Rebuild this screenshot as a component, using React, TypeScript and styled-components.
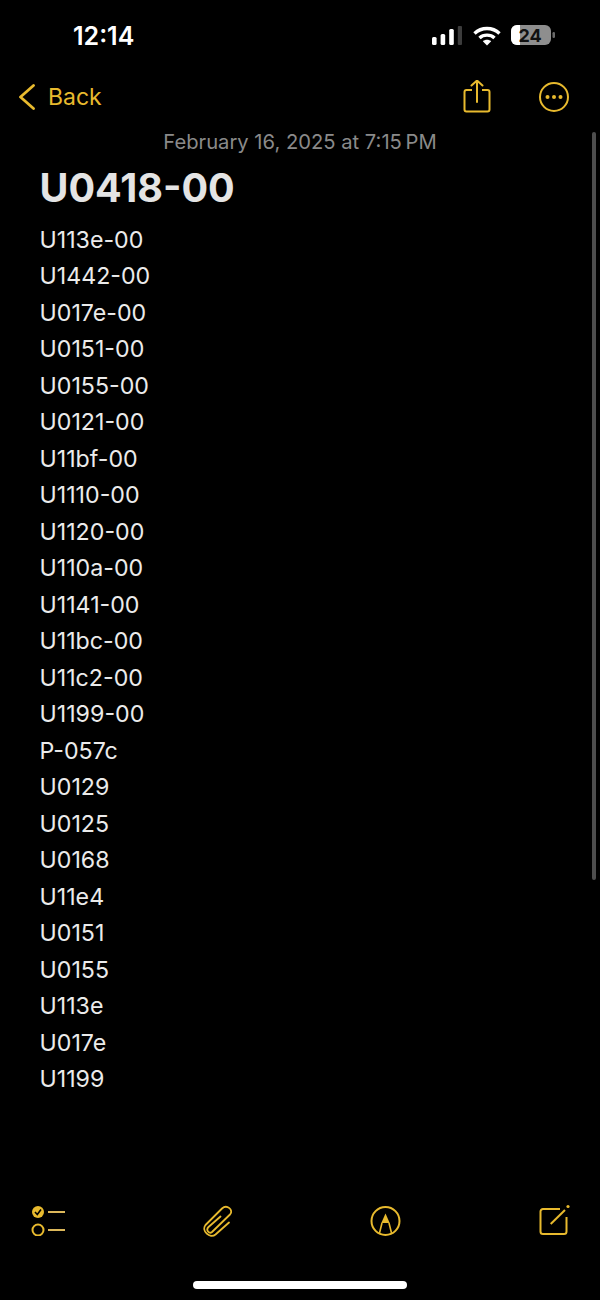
import React from "react";
import styled, { createGlobalStyle } from "styled-components";

const Global = createGlobalStyle`
  html, body { margin: 0; padding: 0; background: #000; }
  #root { width: 600px; height: 1300px; }
`;

const Gold = "#e8ba2e";

const Page = styled.div`
  position: relative;
  width: 600px;
  height: 1300px;
  overflow: hidden;
  background: #000;
  display: flex;
  flex-direction: column;
  font-family: Inter, "Liberation Sans", sans-serif;
  color: #f2f2f2;
`;
const StatusBar = styled.div`
  height: 72px;
  display: flex;
  align-items: flex-start;
  justify-content: space-between;
  padding: 0 44px 0 73px;
  box-sizing: border-box;
`;
const Clock = styled.div`
  font-size: 25px;
  font-weight: 600;
  line-height: 30px;
  margin-top: 21px;
  color: #fff;
`;
const StatusIcons = styled.div`
  display: flex;
  align-items: center;
  margin-top: 24px;
  height: 24px;
`;
const NavBar = styled.div`
  height: 50px;
  display: flex;
  align-items: center;
  padding: 0 31px 0 18px;
  color: ${Gold};
`;
const BackLabel = styled.span`
  font-size: 23px;
  margin-left: 12px;
  color: ${Gold};
  flex: 1;
`;
const Icon = styled.svg<{ $left?: number; $right?: number }>`
  display: block;
  flex: none;
  margin-left: ${(p) => p.$left ?? 0}px;
  margin-right: ${(p) => p.$right ?? 0}px;
`;
const DateLine = styled.div`
  text-align: center;
  font-size: 20.2px;
  line-height: 28px;
  color: #8a8a8a;
  margin-top: 5.5px;
`;
const Note = styled.div`
  padding: 0 39.5px;
`;
const Title = styled.h1`
  margin: 9.5px 0 10.5px;
  font-size: 39.5px;
  line-height: 46px;
  font-weight: 700;
  color: #e4e4e4;
`;
const Line = styled.div`
  font-size: 23.2px;
  line-height: 36.52px;
  color: #ebebeb;
`;
const Toolbar = styled.div`
  margin-top: auto;
  display: flex;
  justify-content: space-between;
  align-items: center;
  padding: 0 29px 0 31px;
  height: 48px;
`;
const HomeZone = styled.div`
  height: 56px;
  display: flex;
  justify-content: center;
  align-items: flex-end;
  padding-bottom: 11px;
  box-sizing: border-box;
`;
const HomeBar = styled.div`
  width: 214px;
  height: 8px;
  border-radius: 4px;
  background: #fff;
`;
const Scroll = styled.div`
  position: absolute;
  right: 4px;
  top: 132px;
  width: 4px;
  height: 748px;
  border-radius: 2px;
  background: #4e4e4e;
`;

const lines = [
  "U113e-00","U1442-00","U017e-00","U0151-00","U0155-00","U0121-00","U11bf-00","U1110-00",
  "U1120-00","U110a-00","U1141-00","U11bc-00","U11c2-00","U1199-00","P-057c","U0129","U0125",
  "U0168","U11e4","U0151","U0155","U113e","U017e","U1199",
];

export default function App() {
  return (
    <Page>
      <Global />
      <StatusBar>
        <Clock>12:14</Clock>
        <StatusIcons>
          <Icon width="30" height="20" viewBox="0 0 30 20">
            <rect x="0" y="11" width="4.6" height="8" rx="1.5" fill="#fff" />
            <rect x="8.6" y="8" width="4.6" height="11" rx="1.5" fill="#fff" />
            <rect x="17.2" y="3" width="4.6" height="16" rx="1.5" fill="#fff" />
            <rect x="25.8" y="0" width="4.2" height="19" rx="1" fill="#3c3c3c" />
          </Icon>
          <Icon width="28" height="20" viewBox="0 0 28 20" $left={11}>
            <path d="M1.5 7.5C8.5 .8 19.5 .8 26.5 7.5" fill="none" stroke="#fff" strokeWidth="3.4" />
            <path d="M6.5 12C10.5 8.2 17.5 8.2 21.5 12" fill="none" stroke="#fff" strokeWidth="3.4" />
            <path d="M14 19.5L9.8 15.2C12 13.2 16 13.2 18.2 15.2Z" fill="#fff" />
          </Icon>
          <Icon width="46" height="22" viewBox="0 0 46 22" $left={9}>
            <rect x="1" y="0" width="40" height="20" rx="6" fill="#8e8e8e" />
            <path d="M7 0H10V20H7A6 6 0 0 1 1 14V6A6 6 0 0 1 7 0Z" fill="#fff" />
            <rect x="42.5" y="7" width="2.5" height="6" rx="1.2" fill="#6a6a6a" />
            <text x="20" y="17" fontFamily="Inter, sans-serif" fontSize="18" fontWeight="700" fill="#111" textAnchor="middle">24</text>
          </Icon>
        </StatusIcons>
      </StatusBar>
      <NavBar>
        <Icon width="18" height="26" viewBox="0 0 18 26">
          <path d="M15.5 1.5L2.5 13L15.5 24.5" fill="none" stroke={Gold} strokeWidth="2.8" strokeLinecap="round" strokeLinejoin="round" />
        </Icon>
        <BackLabel>Back</BackLabel>
        <Icon width="28" height="34" viewBox="0 0 28 34" $right={48}>
          <path d="M9 10H3.5A2 2 0 0 0 1.5 12V29.5A2 2 0 0 0 3.5 31.5H24.5A2 2 0 0 0 26.5 29.5V12A2 2 0 0 0 24.5 10H19" fill="none" stroke={Gold} strokeWidth="2" />
          <path d="M14 22V1M8.5 5.5L14 .5L19.5 5.5" fill="none" stroke={Gold} strokeWidth="2" strokeLinecap="round" strokeLinejoin="round" />
        </Icon>
        <Icon width="30" height="30" viewBox="0 0 30 30">
          <circle cx="15" cy="15" r="14" fill="none" stroke={Gold} strokeWidth="2" />
          <circle cx="8.5" cy="15" r="2" fill={Gold} />
          <circle cx="15" cy="15" r="2" fill={Gold} />
          <circle cx="21.5" cy="15" r="2" fill={Gold} />
        </Icon>
      </NavBar>
      <DateLine>February 16, 2025 at 7:15{"\u2009"}PM</DateLine>
      <Note>
        <Title>U0418-00</Title>
        {lines.map((l, i) => <Line key={i}>{l}</Line>)}
      </Note>
      <Toolbar>
        <Icon width="34" height="32" viewBox="0 0 34 32">
          <circle cx="7" cy="8" r="6" fill={Gold} />
          <path d="M4 8L6.3 10.5L10 5.5" fill="none" stroke="#000" strokeWidth="1.6" />
          <path d="M17 8H34M17 26H34" stroke="#dcb75a" strokeWidth="1.8" />
          <circle cx="7" cy="26" r="5.5" fill="none" stroke={Gold} strokeWidth="2" />
        </Icon>
        <Icon width="30" height="34" viewBox="0 0 30 34">
          <path d="M27 19.5L13.5 31.5C8 36 -1 28 3.5 22L20 5.5C25 1 32 7 28 11.5L10 29C7 31.5 3.5 27 6.5 24L18.5 13.5" fill="none" stroke={Gold} strokeWidth="1.8" strokeLinecap="round" strokeLinejoin="round" />
        </Icon>
        <Icon width="32" height="32" viewBox="0 0 32 32">
          <circle cx="15.5" cy="17" r="14" fill="none" stroke={Gold} strokeWidth="2" />
          <path d="M12 19L9.5 29M19 19L21.5 29" fill="none" stroke={Gold} strokeWidth="1.6" />
          <path d="M15.5 9.5L19.7 19H11.3Z" fill={Gold} />
        </Icon>
        <Icon width="32" height="32" viewBox="0 0 32 32">
          <path d="M21 5H4A2.5 2.5 0 0 0 1.5 7.5V27.5A2.5 2.5 0 0 0 4 30H25A2.5 2.5 0 0 0 27.5 27.5V13" fill="none" stroke={Gold} strokeWidth="2" />
          <path d="M11.7 20L26 6" stroke={Gold} strokeWidth="2" />
          <circle cx="29" cy="2.5" r="1.6" fill={Gold} />
        </Icon>
      </Toolbar>
      <HomeZone><HomeBar /></HomeZone>
      <Scroll />
    </Page>
  );
}
